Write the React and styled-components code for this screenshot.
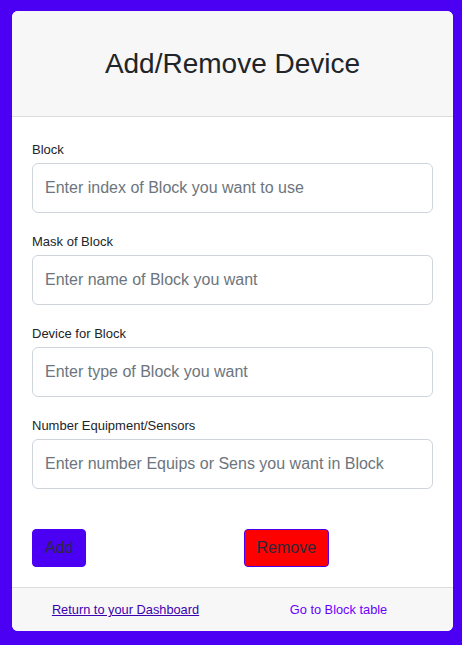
import styled, { createGlobalStyle } from 'styled-components'

const GlobalStyle = createGlobalStyle`
  html, body {
    margin: 0;
    padding: 0;
    background: #4b00f4;
    font-family: "Liberation Sans", Arial, sans-serif;
  }
  * {
    box-sizing: border-box;
  }
`;

const Page = styled.div`
  padding: 11px 9px 14px 12px;
  min-height: 645px;
`;

const Card = styled.div`
  background: #fff;
  border-radius: 6px;
  overflow: hidden;
  width: 441px;
`;

const CardHeader = styled.div`
  background: #f7f7f7;
  border-bottom: 1px solid #dcdcdc;
  height: 106px;
  display: flex;
  align-items: center;
  justify-content: center;
`;

const Title = styled.h1`
  margin: 0;
  font-size: 28px;
  font-weight: 400;
  color: #212529;
`;

const Body = styled.div`
  padding: 25px 20px 20px 20px;
`;

const Field = styled.div`
  display: flex;
  flex-direction: column;
  margin-bottom: 21px;
`;

const Label = styled.label`
  font-size: 13px;
  color: #212529;
  margin-bottom: 6px;
  line-height: 15px;
`;

const Input = styled.input`
  height: 50px;
  width: 100%;
  border: 1px solid #ced4da;
  border-radius: 6px;
  padding: 0 12px;
  font-size: 16px;
  font-family: inherit;
  color: #212529;
  outline: none;
  &::placeholder {
    color: #6c757d;
  }
`;

const Actions = styled.div`
  display: grid;
  grid-template-columns: 1fr 1fr;
  margin-top: 40px;
`;

const Cell = styled.div`
  padding-left: ${p => (p.$right ? '11px' : '0')};
`;

const Button = styled.button`
  height: 38px;
  padding: 0 12px;
  font-size: 16px;
  font-family: inherit;
  color: #2a2a3a;
  background: ${p => p.$bg};
  border: 1px solid ${p => p.$border || p.$bg};
  border-radius: 4px;
  cursor: pointer;
`;

const Footer = styled.div`
  background: #f7f7f7;
  border-top: 1px solid #dcdcdc;
  height: 44px;
  display: grid;
  grid-template-columns: 1fr 1fr;
  align-items: center;
  padding: 0 8px 0 7px;
`;

const FooterLink = styled.a`
  font-size: 12.8px;
  text-align: center;
  color: ${p => p.$color};
  text-decoration: ${p => (p.$underline ? 'underline' : 'none')};
  cursor: pointer;
`;

const fields = [
  { label: 'Block', placeholder: 'Enter index of Block you want to use' },
  { label: 'Mask of Block', placeholder: 'Enter name of Block you want' },
  { label: 'Device for Block', placeholder: 'Enter type of Block you want' },
  { label: 'Number Equipment/Sensors', placeholder: 'Enter number Equips or Sens you want in Block' },
];

const App = () => {
  return (
    <Page>
      <GlobalStyle />
      <Card>
        <CardHeader>
          <Title>Add/Remove Device</Title>
        </CardHeader>
        <Body>
          {fields.map(f => (
            <Field key={f.label}>
              <Label>{f.label}</Label>
              <Input placeholder={f.placeholder} />
            </Field>
          ))}
          <Actions>
            <Cell>
              <Button $bg="#4b00f4">Add</Button>
            </Cell>
            <Cell $right>
              <Button $bg="#ff0000" $border="#4b00f4">Remove</Button>
            </Cell>
          </Actions>
        </Body>
        <Footer>
          <FooterLink $color="#3d00b0" $underline>Return to your Dashboard</FooterLink>
          <FooterLink $color="#6a00ff">Go to Block table</FooterLink>
        </Footer>
      </Card>
    </Page>
  );
}

export default App
